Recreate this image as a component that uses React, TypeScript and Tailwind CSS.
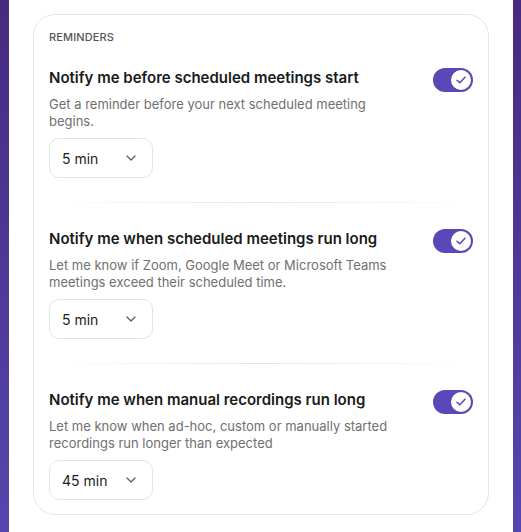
import { useState } from "react";

type Reminder = {
  title: string;
  desc: string;
  value: string;
};

const reminders: Reminder[] = [
  {
    title: "Notify me before scheduled meetings start",
    desc: "Get a reminder before your next scheduled meeting begins.",
    value: "5 min",
  },
  {
    title: "Notify me when scheduled meetings run long",
    desc: "Let me know if Zoom, Google Meet or Microsoft Teams meetings exceed their scheduled time.",
    value: "5 min",
  },
  {
    title: "Notify me when manual recordings run long",
    desc: "Let me know when ad-hoc, custom or manually started recordings run longer than expected",
    value: "45 min",
  },
];

const Toggle = ({ on, onClick }: { on: boolean; onClick: () => void }) => (
  <button
    onClick={onClick}
    className={`flex items-center w-10 h-6 shrink-0 rounded-full p-[2px] ${
      on ? "bg-[#5a48b9] justify-end" : "bg-[#d6d6d6] justify-start"
    }`}
  >
    <span className="flex items-center justify-center w-5 h-5 rounded-full bg-white">
      {on && (
        <svg width="14" height="14" viewBox="0 0 14 14" fill="none">
          <path
            d="M3 7.2 5.8 9.8 11 4.2"
            stroke="#5a48b9"
            strokeWidth="1.5"
            strokeLinecap="round"
            strokeLinejoin="round"
          />
        </svg>
      )}
    </span>
  </button>
);

const Select = ({ value }: { value: string }) => (
  <div className="mt-2 flex items-center justify-between w-[104px] h-10 pl-3 pr-4 rounded-[10px] border border-[#e4e4e4] bg-white text-[14px] text-[#1c1c1c]">
    <span>{value}</span>
    <svg width="10" height="6" viewBox="0 0 10 6" fill="none">
      <path d="M1 1l4 4 4-4" stroke="#5c5c5c" strokeWidth="1.3" strokeLinecap="round" strokeLinejoin="round" />
    </svg>
  </div>
);

export default function App() {
  const [state, setState] = useState([true, true, true]);

  return (
    <div
      className="flex w-[521px] h-[532px] bg-gradient-to-b from-[#472a7f] to-[#5546ae]"
      style={{ fontFamily: "Inter, 'Noto Sans', sans-serif" }}
    >
      <div className="ml-[9px] w-[504px] h-full bg-white px-6 pt-[14px]">
        <div className="rounded-[22px] border border-[#e6e6e6] px-[15px] pt-[14px] pb-[14px]">
          <div className="text-[11px] leading-4 font-medium text-[#555] tracking-[0.01em]">REMINDERS</div>

          <div className="mt-[23px]">
            {reminders.map((r, i) => (
              <div key={i}>
                {i > 0 && (
                  <div className="mt-6 mb-[26px] h-px bg-gradient-to-r from-transparent via-[#e6e6e6] to-transparent" />
                )}
                <div className="flex items-start justify-between gap-4">
                  <div className="flex-1">
                    <div className="text-[15px] leading-5 font-semibold text-[#1a1a1a]">{r.title}</div>
                    <div className="mt-2 text-[13px] leading-[17px] text-[#707070] max-w-[350px]">{r.desc}</div>
                    <Select value={r.value} />
                  </div>
                  <Toggle
                    on={state[i]}
                    onClick={() => setState((s) => s.map((v, j) => (j === i ? !v : v)))}
                  />
                </div>
              </div>
            ))}
          </div>
        </div>
      </div>
    </div>
  );
}
